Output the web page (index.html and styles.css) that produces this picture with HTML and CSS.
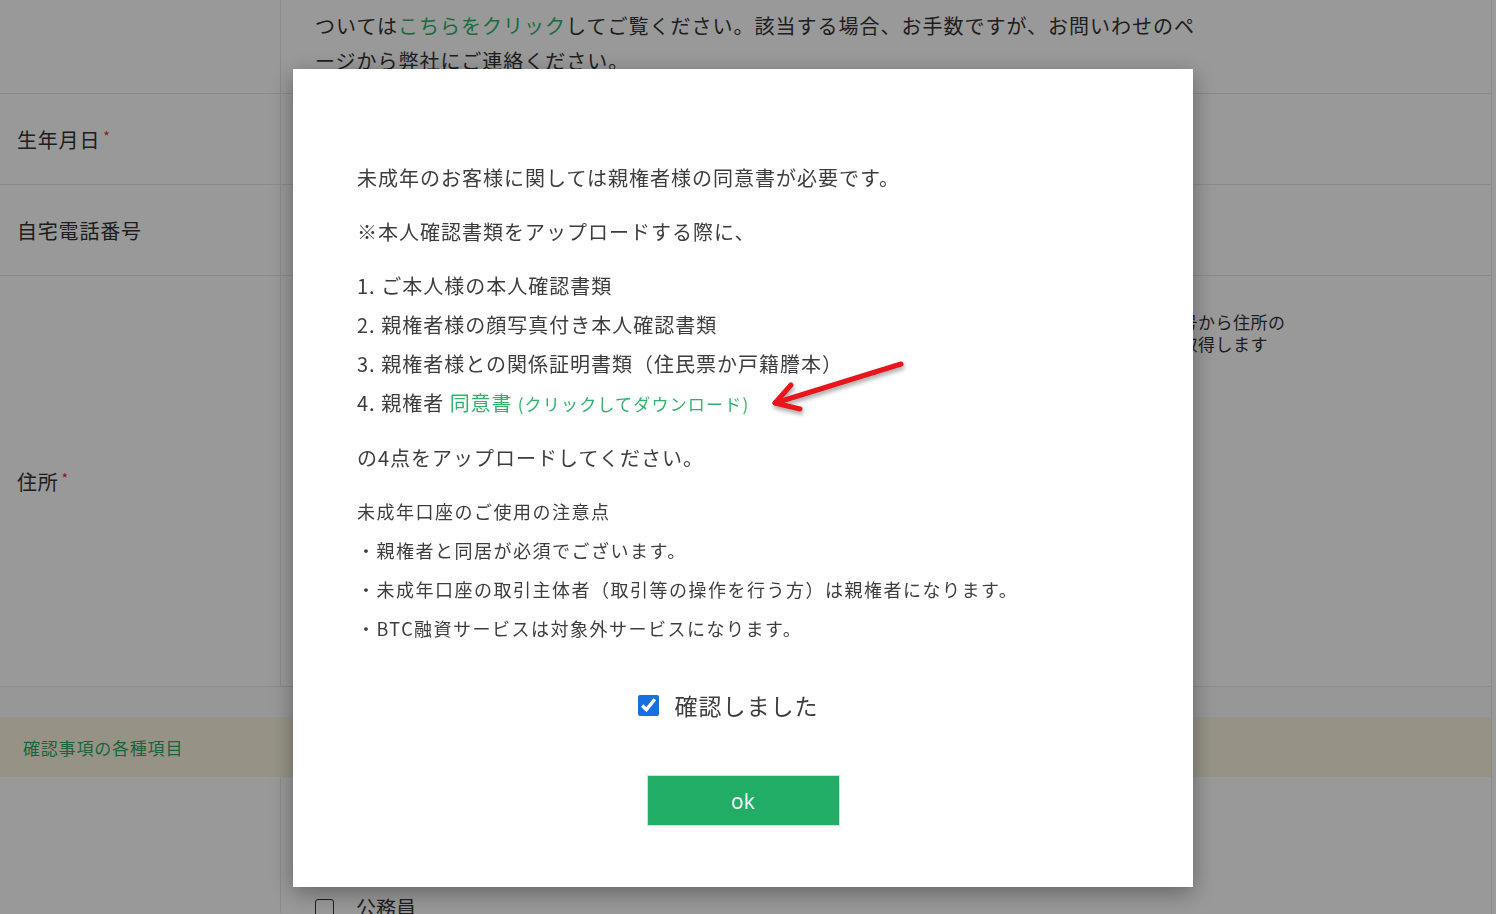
FILE: index.html
```html
<!DOCTYPE html>
<html lang="ja">
<head>
<meta charset="utf-8">
<title>未成年口座の注意</title>
<link rel="stylesheet" href="styles.css">
</head>
<body>
<div class="page">
  <div class="row row-intro">
    <div class="label"></div>
    <div class="content intro">ついては<span class="link">こちらをクリック</span>してご覧ください。該当する場合、お手数ですが、お問いわせのペ<br>ージから弊社にご連絡ください。</div>
  </div>
  <div class="row row-std">
    <div class="label"><span>生年月日<sup class="req">*</sup></span></div>
    <div class="content"></div>
  </div>
  <div class="row row-std">
    <div class="label"><span>自宅電話番号</span></div>
    <div class="content"></div>
  </div>
  <div class="row row-address">
    <div class="label"><span>住所<sup class="req">*</sup></span></div>
    <div class="content address">
      <div class="zip-field"></div>
      <div class="zip-note">郵便番号から住所の<br>情報を取得します</div>
    </div>
  </div>
  <div class="spacer"></div>
  <div class="band">確認事項の各種項目</div>
  <div class="row row-check">
    <div class="label"></div>
    <div class="content check-list">
      <label class="check-item"><span class="box"></span>公務員</label>
    </div>
  </div>
</div>

<div class="overlay">
  <div class="modal">
    <div class="modal-body">
      <p>未成年のお客様に関しては親権者様の同意書が必要です。</p>
      <p>※本人確認書類をアップロードする際に、</p>
      <p>1. ご本人様の本人確認書類<br>2. 親権者様の顔写真付き本人確認書類<br>3. 親権者様との関係証明書類（住民票か戸籍謄本）<br>4. 親権者 <a class="dl" href="#">同意書<span class="dl-sub"> (クリックしてダウンロード)</span></a></p>
      <p>の4点をアップロードしてください。</p>
      <p class="notes">未成年口座のご使用の注意点<br>・親権者と同居が必須でございます。<br>・未成年口座の取引主体者（取引等の操作を行う方）は親権者になります。<br>・BTC融資サービスは対象外サービスになります。</p>
    </div>
    <label class="confirm"><input type="checkbox" checked><span>確認しました</span></label>
    <button class="ok" type="button">ok</button>
    <svg class="arrow" width="160" height="80" viewBox="0 0 160 80" aria-hidden="true">
      <defs>
        <filter id="sh" x="-20%" y="-40%" width="140%" height="180%">
          <feDropShadow dx="1" dy="3" stdDeviation="2" flood-color="#000" flood-opacity="0.35"/>
        </filter>
      </defs>
      <g filter="url(#sh)" fill="none" stroke="#e8131b" stroke-width="5" stroke-linecap="round" stroke-linejoin="round">
        <path d="M141 14 L15 53"/>
        <path d="M31 35 L15 53 L40 59"/>
      </g>
    </svg>
  </div>
</div>
</body>
</html>
```

FILE: styles.css
```css
* { box-sizing: border-box; }

html, body {
  margin: 0;
  padding: 0;
  background: #fff;
}

body {
  font-family: "Noto Sans CJK JP", "Noto Sans", "Liberation Sans", sans-serif;
  color: #333;
  overflow: hidden;
  height: 914px;
}

.page {
  width: 1492px;
  height: 914px;
  overflow: hidden;
  border-right: 1px solid #e6e6e6;
}

.row {
  display: flex;
  border-bottom: 1px solid #e6e6e6;
}

.label {
  width: 281px;
  flex: none;
  border-right: 1px solid #e6e6e6;
  display: flex;
  align-items: center;
  padding-left: 17px;
  font-size: 20px;
  letter-spacing: 0.8px;
  color: #333;
}

.req {
  color: #d33;
  font-size: 14px;
  vertical-align: 6px;
  line-height: 0;
  margin-left: 3px;
}

.content {
  flex: 1;
  padding-left: 34px;
}

.row-intro { height: 94px; }
.row-std { height: 91px; }
.row-address { height: 411px; }

.intro {
  font-size: 20px;
  line-height: 35px;
  padding-top: 8px;
  white-space: nowrap;
  letter-spacing: 1px;
}

.link { color: #2bb56a; }

.address {
  display: flex;
  padding-top: 35px;
}

.zip-field { flex: 1; }

.zip-note {
  width: 363px;
  flex: none;
  font-size: 17px;
  line-height: 22px;
  letter-spacing: 0.5px;
}

.spacer {
  height: 30px;
  background: #fcfcfc;
}

.band {
  height: 60px;
  background: #faf6e0;
  display: flex;
  align-items: center;
  padding-left: 23px;
  font-size: 17px;
  letter-spacing: 0.8px;
  color: #2ea663;
}

.row-check { height: 136px; border-bottom: none; }

.check-list { padding-top: 118px; }

.check-item {
  display: flex;
  align-items: center;
  gap: 22px;
  font-size: 20px;
  line-height: 26px;
}

.box {
  width: 19px;
  height: 19px;
  border: 1.5px solid #333;
  border-radius: 3px;
  background: #fff;
}

/* overlay + modal */
.overlay {
  position: fixed;
  inset: 0;
  background: rgba(0, 0, 0, 0.4);
  padding: 69px 0 0 293px;
}

.modal {
  position: relative;
  width: 900px;
  height: 818px;
  background: #fff;
  box-shadow: 0 6px 22px rgba(0, 0, 0, 0.35);
  display: flex;
  flex-direction: column;
  align-items: center;
  padding: 89px 64px 0;
}

.modal-body {
  align-self: stretch;
  color: #3d3d3d;
}

.modal-body p {
  margin: 0 0 15px;
  font-size: 20px;
  line-height: 39px;
  letter-spacing: 1px;
  white-space: nowrap;
}

.modal-body p.notes {
  font-size: 18px;
  letter-spacing: 1.5px;
  margin-bottom: 0;
}

.dl {
  color: #2fb36a;
  text-decoration: none;
}

.dl-sub {
  font-size: 17px;
  letter-spacing: 1.2px;
}

.confirm {
  margin-top: 37px;
  height: 40px;
  display: flex;
  align-items: center;
  gap: 16px;
  margin-right: 30px;
  font-size: 23px;
  letter-spacing: 1px;
  color: #3d3d3d;
}

.confirm input {
  width: 21px;
  height: 21px;
  margin: 0;
  accent-color: #1a6fe0;
}

.ok {
  margin-top: 50px;
  width: 193px;
  height: 51px;
  background: #22ad66;
  border: 1px solid #cfe6d8;
  color: #fff;
  font-family: "Noto Sans", "Liberation Sans", sans-serif;
  font-size: 21px;
  cursor: pointer;
}

.arrow {
  position: absolute;
  left: 467px;
  top: 281px;
}
```
